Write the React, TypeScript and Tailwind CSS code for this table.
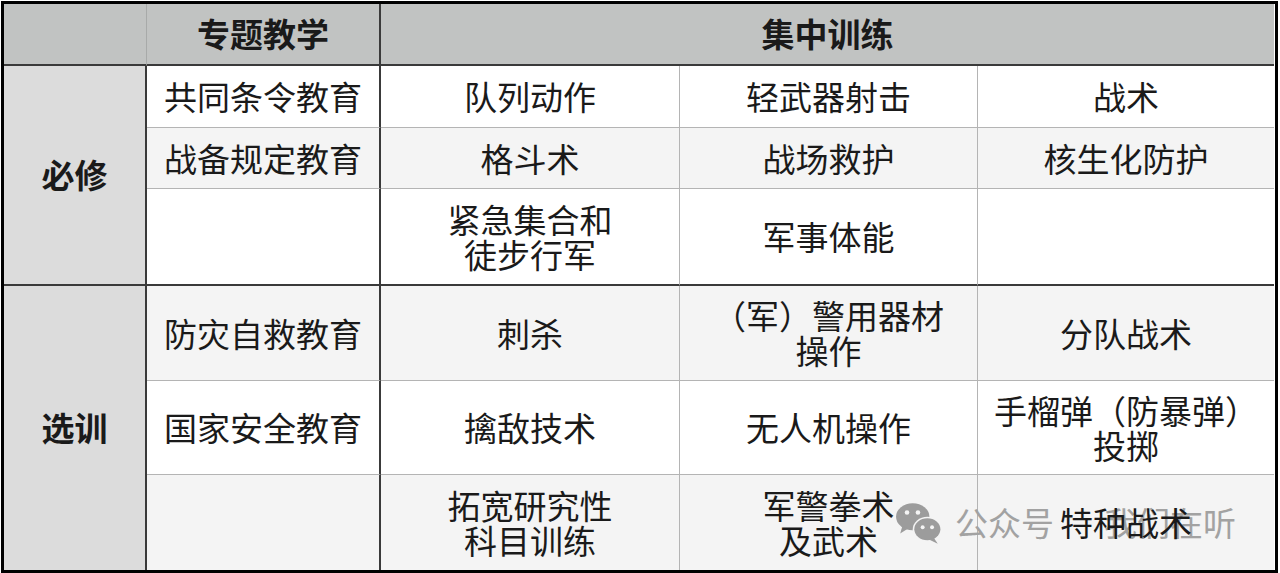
import React from 'react';

const font = { fontFamily: '"Noto Sans CJK SC", "Noto Sans", sans-serif' };

type Cell = { text: string[]; bg: string };

const rows: { left: string; items: Cell[][] }[] = [
  {
    left: '必修',
    items: [
      [
        { text: ['共同条令教育'], bg: 'bg-white' },
        { text: ['队列动作'], bg: 'bg-white' },
        { text: ['轻武器射击'], bg: 'bg-white' },
        { text: ['战术'], bg: 'bg-white' },
      ],
      [
        { text: ['战备规定教育'], bg: 'bg-[#f4f4f4]' },
        { text: ['格斗术'], bg: 'bg-[#f4f4f4]' },
        { text: ['战场救护'], bg: 'bg-[#f4f4f4]' },
        { text: ['核生化防护'], bg: 'bg-[#f4f4f4]' },
      ],
      [
        { text: [], bg: 'bg-white' },
        { text: ['紧急集合和', '徒步行军'], bg: 'bg-white' },
        { text: ['军事体能'], bg: 'bg-white' },
        { text: [], bg: 'bg-white' },
      ],
    ],
  },
  {
    left: '选训',
    items: [
      [
        { text: ['防灾自救教育'], bg: 'bg-[#f4f4f4]' },
        { text: ['刺杀'], bg: 'bg-[#f4f4f4]' },
        { text: ['（军）警用器材', '操作'], bg: 'bg-[#f4f4f4]' },
        { text: ['分队战术'], bg: 'bg-[#f4f4f4]' },
      ],
      [
        { text: ['国家安全教育'], bg: 'bg-white' },
        { text: ['擒敌技术'], bg: 'bg-white' },
        { text: ['无人机操作'], bg: 'bg-white' },
        { text: ['手榴弹（防暴弹）', '投掷'], bg: 'bg-white' },
      ],
      [
        { text: [], bg: 'bg-[#f4f4f4]' },
        { text: ['拓宽研究性', '科目训练'], bg: 'bg-[#f4f4f4]' },
        { text: ['军警拳术', '及武术'], bg: 'bg-[#f4f4f4]' },
        { text: ['特种战术'], bg: 'bg-[#f4f4f4]' },
      ],
    ],
  },
];

// right border per column index (0 = 专题教学 column)
const colBorder = [
  'border-r-2 border-r-[#3a3a3a]',
  'border-r border-r-[#b4b4b4]',
  'border-r border-r-[#b4b4b4]',
  '',
];

const WeChatIcon = () => (
  <svg width="48" height="44" viewBox="0 0 46 42">
    <ellipse cx="17" cy="15" rx="16" ry="13" fill="#9c9c9c" />
    <path d="M7 24 L5 31 L13 26 Z" fill="#9c9c9c" />
    <circle cx="11.5" cy="11" r="2.2" fill="#f4f4f4" />
    <circle cx="22" cy="11" r="2.2" fill="#f4f4f4" />
    <ellipse cx="31" cy="27" rx="14" ry="12" fill="#f4f4f4" />
    <ellipse cx="31" cy="27" rx="12.5" ry="10.5" fill="#9c9c9c" />
    <path d="M37 35 L41 41 L33 37 Z" fill="#9c9c9c" />
    <circle cx="26.5" cy="25" r="1.9" fill="#f4f4f4" />
    <circle cx="35.5" cy="25" r="1.9" fill="#f4f4f4" />
  </svg>
);

export default function App() {
  return (
    <div className="w-[1280px] h-[573px] bg-white relative overflow-hidden" style={font}>
      <div className="absolute left-[1px] top-[1px] w-[1277px] h-[572px] border-[3px] border-black">
        <div
          className="grid w-full h-full text-[33px] text-[#1a1a1a]"
          style={{
            gridTemplateColumns: '143px 234px 299px 298px 296px',
            gridTemplateRows: '62px 62px 61px 97px 95px 94px 95px',
          }}
        >
          {/* header */}
          <div className="bg-[#c1c3c2] border-b-2 border-b-[#3a3a3a] border-r border-r-[#a8aaa9]" />
          <div className="bg-[#c1c3c2] border-b-2 border-b-[#3a3a3a] border-r-2 border-r-[#3a3a3a] flex items-center justify-center font-bold">
            专题教学
          </div>
          <div className="col-span-3 bg-[#c1c3c2] border-b-2 border-b-[#3a3a3a] flex items-center justify-center font-bold">
            集中训练
          </div>

          {rows.map((group, gi) => (
            <React.Fragment key={group.left}>
              <div
                className={`row-span-3 bg-[#dcdcdc] border-r-2 border-r-[#3a3a3a] flex items-center justify-center font-bold ${
                  gi === 0 ? 'border-b-2 border-b-[#3a3a3a]' : ''
                }`}
              >
                {group.left}
              </div>
              {group.items.map((row, ri) =>
                row.map((cell, ci) => {
                  const last = ri === 2;
                  const bottom =
                    last && gi === 0
                      ? 'border-b-2 border-b-[#3a3a3a]'
                      : last
                      ? ''
                      : 'border-b border-b-[#b4b4b4]';
                  return (
                    <div
                      key={`${gi}-${ri}-${ci}`}
                      className={`${cell.bg} ${bottom} ${colBorder[ci]} flex flex-col items-center justify-center leading-[35px] text-center`}
                    >
                      {cell.text.map((t) => (
                        <span key={t} className="relative z-10">
                          {t}
                        </span>
                      ))}
                    </div>
                  );
                })
              )}
            </React.Fragment>
          ))}
        </div>

        {/* watermark */}
        <div className="absolute left-[891px] top-[494px] flex items-center gap-[12px] text-[33px] text-[#a2a2a2] pointer-events-none">
          <WeChatIcon />
          <span className="flex gap-[50px]">
            <span>公众号</span>
            <span>我们在听</span>
          </span>
        </div>
      </div>
    </div>
  );
}
